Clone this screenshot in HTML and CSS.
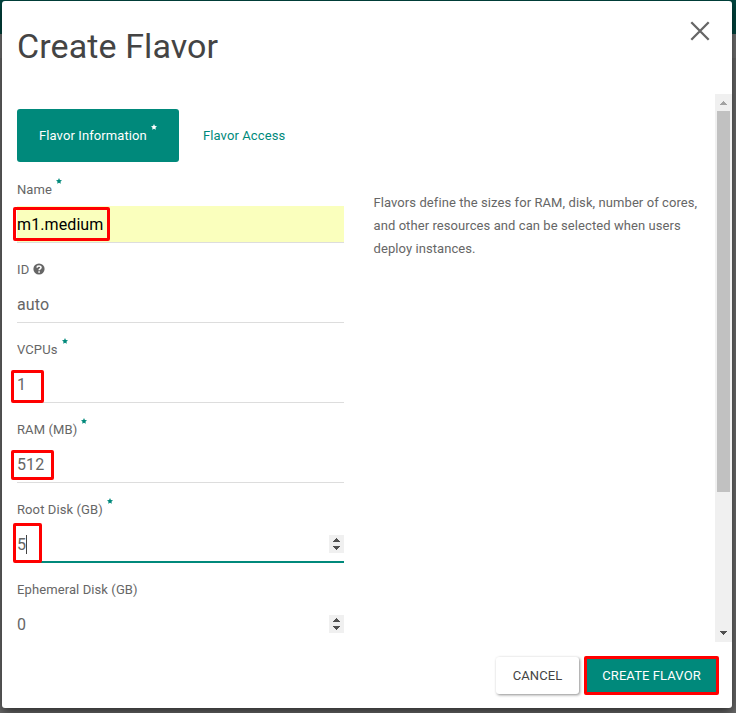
FILE: index.html
```html
<!DOCTYPE html>
<html lang="en">
<head>
<meta charset="utf-8">
<title>Create Flavor</title>
<link rel="stylesheet" href="styles.css">
</head>
<body>
<div class="modal">
  <header class="modal-header">
    <h1>Create Flavor</h1>
    <svg class="close" width="20" height="20" viewBox="0 0 20 20"><path d="M1.3 1.3L18.7 18.7M18.7 1.3L1.3 18.7"/></svg>
  </header>
  <div class="modal-body">
    <div class="content">
      <nav class="tabs">
        <a class="tab active">Flavor Information<svg class="star" viewBox="0 0 10 10"><path d="M5 0l1.5 3.3 3.5.4-2.6 2.4.7 3.6L5 7.9 1.9 9.7l.7-3.6L0 3.7l3.5-.4z"/></svg></a>
        <a class="tab">Flavor Access</a>
      </nav>
      <div class="columns">
        <form class="fields">
          <div class="field">
            <label>Name<svg class="star" viewBox="0 0 10 10"><path d="M5 0l1.5 3.3 3.5.4-2.6 2.4.7 3.6L5 7.9 1.9 9.7l.7-3.6L0 3.7l3.5-.4z"/></svg></label>
            <div class="input filled"><span>m1.medium</span><i class="mark mark-name"></i></div>
          </div>
          <div class="field">
            <label>ID<svg class="help" viewBox="0 0 12 12"><circle cx="6" cy="6" r="5.6"/><path d="M4 4.6C4.1 2.6 8 2.5 8 4.6 8 5.9 6.1 5.8 6.1 7.2M6.1 8.2V9.7"/></svg></label>
            <div class="input"><span>auto</span></div>
          </div>
          <div class="field">
            <label>VCPUs<svg class="star" viewBox="0 0 10 10"><path d="M5 0l1.5 3.3 3.5.4-2.6 2.4.7 3.6L5 7.9 1.9 9.7l.7-3.6L0 3.7l3.5-.4z"/></svg></label>
            <div class="input"><span>1</span><i class="mark mark-cpu"></i></div>
          </div>
          <div class="field">
            <label>RAM (MB)<svg class="star" viewBox="0 0 10 10"><path d="M5 0l1.5 3.3 3.5.4-2.6 2.4.7 3.6L5 7.9 1.9 9.7l.7-3.6L0 3.7l3.5-.4z"/></svg></label>
            <div class="input"><span>512</span><i class="mark mark-ram"></i></div>
          </div>
          <div class="field">
            <label>Root Disk (GB)<svg class="star" viewBox="0 0 10 10"><path d="M5 0l1.5 3.3 3.5.4-2.6 2.4.7 3.6L5 7.9 1.9 9.7l.7-3.6L0 3.7l3.5-.4z"/></svg></label>
            <div class="input focused"><span>5</span><b class="caret"></b><svg class="spinner" width="15" height="18" viewBox="0 0 15 18"><path d="M7.5 3L11 7H4zM4 11h7l-3.5 4z"/></svg><i class="mark mark-disk"></i></div>
          </div>
          <div class="field">
            <label>Ephemeral Disk (GB)</label>
            <div class="input"><span>0</span><svg class="spinner" width="15" height="18" viewBox="0 0 15 18"><path d="M7.5 3L11 7H4zM4 11h7l-3.5 4z"/></svg></div>
          </div>
        </form>
        <p class="hint">Flavors define the sizes for RAM, disk, number of cores, and other resources and can be selected when users deploy instances.</p>
      </div>
    </div>
    <div class="scrollbar">
      <svg class="arrow up" width="17" height="17" viewBox="0 0 17 17"><path d="M8.5 7L12 11H5z"/></svg>
      <div class="thumb"></div>
      <svg class="arrow down" width="17" height="17" viewBox="0 0 17 17"><path d="M5 6h7l-3.5 4z"/></svg>
    </div>
  </div>
  <footer class="modal-footer">
    <button class="cancel">CANCEL</button>
    <button class="create">CREATE FLAVOR</button>
  </footer>
</div>
</body>
</html>
```

FILE: styles.css
```css
* { box-sizing: border-box; }
body {
  margin: 0;
  width: 736px;
  height: 713px;
  padding: 1px 4px 5px 2px;
  overflow: hidden;
  background: linear-gradient(#004640 0 34px, #737373 34px 58px, #6b6b6b 58px);
  font: 13px/23px Roboto, sans-serif;
  letter-spacing: .1px;
  color: #666;
}
.modal {
  width: 730px;
  height: 707px;
  display: flex;
  flex-direction: column;
  background: #fff;
  border-radius: 3px;
  box-shadow: 0 4px 12px rgba(0, 0, 0, .6);
}
.modal-header {
  height: 93px;
  padding: 20px 22px 0 15px;
  display: flex;
  justify-content: space-between;
  align-items: flex-start;
}
h1 {
  margin: 5px 0 0;
  font-size: 34px;
  line-height: 40px;
  font-weight: 400;
  letter-spacing: .1px;
  color: #444;
}
.close { fill: none; stroke: #666; stroke-width: 2.3; }
.modal-body { height: 548px; display: flex; overflow: hidden; }
.content { width: 713px; padding: 15px 15px 0; }
.tabs { display: flex; height: 53px; }
.tab {
  display: flex;
  align-items: center;
  padding: 0 22px;
  white-space: nowrap;
  color: #00897b;
}
.tab.active {
  width: 162px;
  margin-right: 2px;
  border-radius: 3px;
  background: #00897b;
  color: #fff;
}
.star { width: 6px; height: 6px; margin-left: 4px; fill: #00897b; flex: none; }
.tab .star { fill: #fff; margin-bottom: 17px; }
.columns { display: flex; gap: 29.5px; padding-top: 16px; }
.fields { width: 327px; flex: none; }
.field { height: 80px; }
label { display: flex; align-items: center; height: 23px; margin-bottom: 5px; }
label .star { margin-bottom: 18px; }
.help { width: 12px; height: 12px; margin: 0 0 1px 4px; fill: #666; }
.help path { fill: none; stroke: #fff; stroke-width: 1.6; }
.input {
  position: relative;
  display: flex;
  align-items: center;
  height: 37px;
  border-bottom: 1px solid #ddd;
  font-size: 16px;
}
.input span { padding-top: 1px; }
.filled { background: #faffbd; color: #000; }
.focused { border-bottom: 2px solid #00897b; }
.focused span { padding-top: 2px; }
.caret { width: 1px; height: 19px; margin-top: 2px; background: #444; }
.spinner { margin-left: auto; background: #f0f0f0; fill: #505050; shape-rendering: crispEdges; }
.mark { position: absolute; border: 3px solid #f00; border-radius: 2px; }
.mark-name { left: -4px; top: 1px; width: 97px; height: 34px; }
.mark-cpu { left: -6px; top: 4px; width: 33px; height: 33px; }
.mark-ram { left: -6px; top: 4px; width: 43px; height: 30px; }
.mark-disk { left: -4px; top: -3px; width: 29px; height: 40px; }
.hint { width: 330px; margin: 13px 0 0; letter-spacing: .08px; }
.scrollbar { width: 17px; display: flex; flex-direction: column; background: #f0f0f0; }
.arrow { flex: none; shape-rendering: crispEdges; }
.up { fill: #a3a3a3; }
.down { margin-top: auto; fill: #505050; }
.thumb { height: 381px; margin: 0 2px; background: #c1c1c1; }
.modal-footer { display: flex; justify-content: flex-end; gap: 5px; padding: 14px 13px 0 0; }
button {
  height: 39px;
  padding: 0;
  border: 0;
  font: 400 13px/23px Roboto, sans-serif;
  letter-spacing: .1px;
}
.cancel {
  width: 83px;
  height: 37px;
  margin-top: 1px;
  border-radius: 3px;
  background: #fff;
  color: #444;
  box-shadow: 1px 1px 3px rgba(0, 0, 0, .45);
}
.create { width: 135px; border: 3px solid #f00; border-radius: 2px; background: #00897b; color: #fff; }
```
